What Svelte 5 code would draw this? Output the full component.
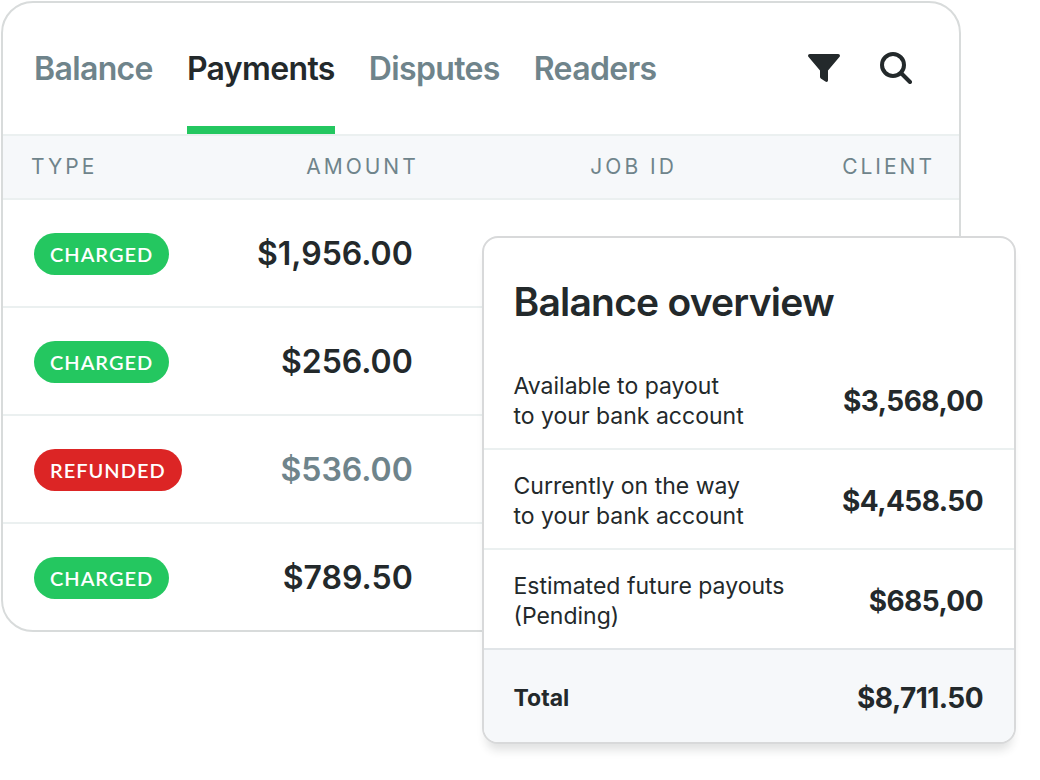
<script>
  const tabs = ['Balance', 'Payments', 'Disputes', 'Readers']
  let activeTab = $state('Payments')

  const payments = [
    { type: 'charged', amount: '$1,956.00' },
    { type: 'charged', amount: '$256.00' },
    { type: 'refunded', amount: '$536.00' },
    { type: 'charged', amount: '$789.50' },
  ]

  const balances = [
    { lines: ['Available to payout', 'to your bank account'], amount: '$3,568,00' },
    { lines: ['Currently on the way', 'to your bank account'], amount: '$4,458.50' },
    { lines: ['Estimated future payouts', '(Pending)'], amount: '$685,00' },
  ]
</script>

<main>
  <section class="payments">
    <header>
      <nav>
        {#each tabs as tab}
          <button class="tab" class:active={tab === activeTab} onclick={() => activeTab = tab}>{tab}</button>
        {/each}
      </nav>
      <div class="tools">
        <button class="tool" aria-label="Filter">
          <svg width="32" height="32" viewBox="0 0 32 32">
            <path d="M1.8 2H30.2C31.8 2 32.5 3.9 31.4 5.1L20 18.6V28.3C20 29.8 18.6 30.4 17.4 29.6L12.8 26.4C12.3 26 12 25.5 12 24.8V18.6L.6 5.1C-.5 3.9 .2 2 1.8 2Z" />
          </svg>
        </button>
        <button class="tool" aria-label="Search">
          <svg width="32" height="32" viewBox="0 0 32 32" class="stroked">
            <circle cx="13" cy="13" r="11" />
            <path d="M21 21L30 30" />
          </svg>
        </button>
      </div>
    </header>

    <table>
      <thead>
        <tr>
          <th class="type">Type</th>
          <th class="amount">Amount</th>
          <th class="job">Job ID</th>
          <th class="client">Client</th>
        </tr>
      </thead>
      <tbody>
        {#each payments as payment}
          <tr>
            <td><span class="badge {payment.type}">{payment.type}</span></td>
            <td class="amount {payment.type}">{payment.amount}</td>
            <td></td>
            <td></td>
          </tr>
        {/each}
      </tbody>
    </table>
  </section>

  <section class="overview">
    <h2>Balance overview</h2>
    <dl>
      {#each balances as balance}
        <div class="row">
          <dt>{balance.lines[0]}<br>{balance.lines[1]}</dt>
          <dd>{balance.amount}</dd>
        </div>
      {/each}
      <div class="row total">
        <dt>Total</dt>
        <dd>$8,711.50</dd>
      </div>
    </dl>
  </section>
</main>

<style>
  :global(body) {
    background: #ffffff;
  }
  /* both cards share the one grid cell, the overview lies on top */
  main {
    display: grid;
    grid-template-columns: minmax(0, 1fr);
    align-items: start;
    padding: 1px 24px 36px 1px;
    color: #23292b;
    font-family: Inter, 'Liberation Sans', sans-serif;
  }
  section {
    grid-area: 1 / 1;
    overflow: hidden;
    background: #ffffff;
  }
  button {
    padding: 0;
    border: 0;
    background: none;
    color: inherit;
    font: inherit;
    cursor: pointer;
  }

  /* payments card */
  .payments {
    margin-right: 55px;
    border: 2px solid #d8dbdb;
    border-radius: 32px;
  }
  header {
    display: flex;
    justify-content: space-between;
    height: 131px;
    padding: 0 47px 0 31px;
  }
  nav {
    display: flex;
    gap: 34px;
  }
  .tab {
    padding-top: 7px;
    border-bottom: 8px solid transparent;
    color: #6f848b;
    font-size: 32px;
    font-weight: 600;
    letter-spacing: -0.02em;
  }
  .tab.active {
    border-bottom-color: #24c760;
    color: #23292b;
  }
  .tools {
    display: flex;
    align-items: center;
    gap: 40px;
    padding-bottom: 2px;
  }
  .tool {
    height: 32px;
  }
  svg {
    display: block;
    fill: #23292b;
  }
  svg.stroked {
    fill: none;
    stroke: #23292b;
    stroke-width: 4;
    stroke-linecap: round;
  }

  table {
    width: 100%;
    border-collapse: separate;
    border-spacing: 0;
    table-layout: fixed;
  }
  th,
  td {
    box-sizing: border-box;
    border-top: 2px solid #ebf0f0;
  }
  th {
    height: 64px;
    padding: 0 24px 1px 28px;
    background: #f6f8fa;
    color: #6f848b;
    font-size: 21px;
    font-weight: 400;
    letter-spacing: 3px;
    text-align: right;
    text-transform: uppercase;
  }
  th.type {
    width: 23%;
    text-align: left;
  }
  th.amount {
    width: 23%;
  }
  th.job {
    width: 27%;
  }
  td {
    height: 108px;
    padding: 1px 30px 0 31px;
  }
  td.amount {
    font-size: 32px;
    font-weight: 600;
    text-align: right;
  }
  td.refunded {
    color: #6f848b;
  }
  .badge {
    display: inline-block;
    padding: 0 16px;
    border-radius: 21px;
    color: #ffffff;
    font-family: Lato, Inter, sans-serif;
    font-size: 20px;
    font-weight: 600;
    line-height: 42px;
    letter-spacing: 1px;
    text-transform: uppercase;
    vertical-align: middle;
  }
  .badge.charged {
    background: #24c760;
  }
  .badge.refunded {
    background: #dc2525;
  }

  /* balance card */
  .overview {
    justify-self: end;
    box-sizing: border-box;
    width: calc(50% + 27px);
    margin-top: 235px;
    border: 2px solid #d8d9da;
    border-radius: 16px;
    box-shadow: 0 10px 10px -4px rgba(35, 41, 43, 0.14);
  }
  h2 {
    margin: 0;
    padding: 40px 30px 24px;
    font-size: 39px;
    font-weight: 600;
    line-height: 48px;
    letter-spacing: -0.02em;
  }
  dl {
    margin: 0;
  }
  .row {
    display: flex;
    justify-content: space-between;
    align-items: center;
    padding: 21px 31px 17px 30px;
    font-size: 23px;
    line-height: 30px;
  }
  .row + .row {
    border-top: 2px solid #ebf0f0;
  }
  dd {
    margin: 0;
    font-size: 28px;
    font-weight: 700;
    letter-spacing: -0.02em;
  }
  .row.total {
    padding: 33px 31px 29px 30px;
    border-top-color: #e1e5e8;
    background: #f6f8fa;
    font-weight: 700;
  }
</style>
